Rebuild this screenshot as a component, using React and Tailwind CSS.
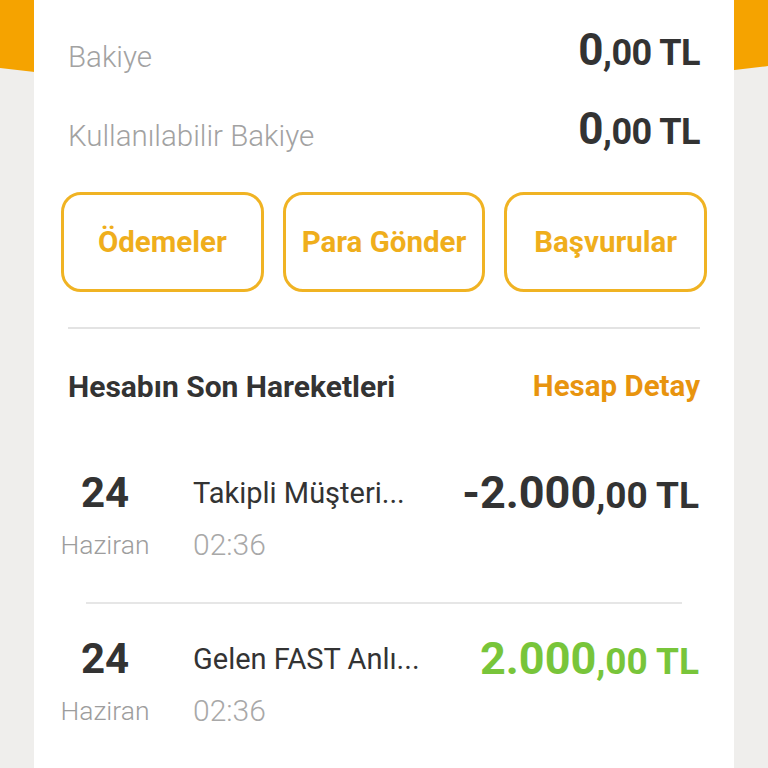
import React from 'react'

function Amount({ main, rest, color }) {
  return (
    <div className={`font-bold ${color}`}>
      <span className="text-[45px]">{main}</span>
      <span className="text-[37px]">{rest}</span>
    </div>
  )
}

function BalanceRow({ label, className }) {
  return (
    <div className={`flex items-center justify-between px-[34px] ${className}`}>
      <span className="text-[29.5px] font-light text-[#a2a2a2]">{label}</span>
      <div className="mb-[14px] font-bold text-[#333] tracking-[-0.5px]">
        <span className="text-[44px]">0</span>
        <span className="text-[36px]">,00 TL</span>
      </div>
    </div>
  )
}

function Movement({ day, month, title, time, main, rest, color }) {
  return (
    <div>
      <div className="flex pl-[28px] pr-[35px] h-[159px] pt-[22px]">
        <div className="w-[86px] flex flex-col items-center">
          <span className="text-[42px] font-bold text-[#333] leading-[56px]">{day}</span>
          <span className="text-[26.5px] font-light text-[#9d9d9d] leading-[48px]">{month}</span>
        </div>
        <div className="ml-[45px] flex flex-col">
          <span className="text-[29px] text-[#333] leading-[56px]">{title}</span>
          <span className="text-[30px] font-light text-[#a8a8a8] leading-[48px]">{time}</span>
        </div>
        <div className="ml-auto leading-[56px]">
          <Amount main={main} rest={rest} color={color} />
        </div>
      </div>
      <div className="mx-[52px] border-t-2 border-[#e6e6e6] mb-[5px]" />
    </div>
  )
}

export default function App() {
  return (
    <div className="relative w-[768px] h-[768px] overflow-hidden bg-[#efeeec]" style={{ fontFamily: 'Roboto, "Noto Sans", sans-serif' }}>
      <svg className="absolute top-0 left-0" width="768" height="80" viewBox="0 0 768 80">
        <path d="M0 0 H768 V66 Q384 116 0 68 Z" fill="#f5a300" />
      </svg>
      <div className="relative mx-[34px] h-full bg-white">
        <BalanceRow label="Bakiye" className="h-[108px] pt-[6px]" />
        <BalanceRow label="Kullanılabilir Bakiye" className="h-[56px]" />
        <div className="mt-[28px] grid grid-cols-3 gap-[19px] px-[27px]">
          {['Ödemeler', 'Para Gönder', 'Başvurular'].map(t => (
            <div key={t} className="h-[100px] rounded-[20px] border-[3px] border-[#f0b323] flex items-center justify-center text-[29.5px] font-bold text-[#efae1c]">
              {t}
            </div>
          ))}
        </div>
        <div className="mt-[35px] mx-[34px] border-t-2 border-[#e3e3e3]" />
        <div className="flex items-center justify-between px-[34px] h-[114px]">
          <span className="text-[30px] font-bold text-[#333]">Hesabın Son Hareketleri</span>
          <span className="text-[29.5px] font-bold text-[#e8940e]">Hesap Detay</span>
        </div>
        <Movement day="24" month="Haziran" title="Takipli Müşteri..." time="02:36" main="-2.000" rest=",00 TL" color="text-[#333]" />
        <Movement day="24" month="Haziran" title="Gelen FAST Anlı..." time="02:36" main="2.000" rest=",00 TL" color="text-[#78c53a]" />
      </div>
    </div>
  )
}
